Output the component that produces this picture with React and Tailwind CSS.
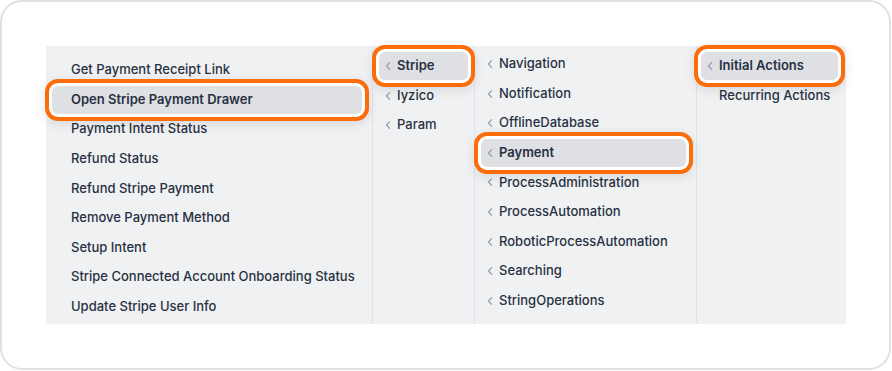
import React from "react";

const ring =
  "relative z-10 bg-[#dfe0e4] shadow-[0_0_0_3px_#ffffff,0_0_0_7px_#fb6c0b,0_3px_12px_7px_rgba(0,0,0,0.10)]";

function Chevron() {
  return (
    <svg width="6" height="8" viewBox="0 0 6 8" className="shrink-0">
      <path d="M4.5 0.8 L1.5 4 L4.5 7.2" fill="none" stroke="#9ca2ab" strokeWidth="1.3" strokeLinecap="round" strokeLinejoin="round" />
    </svg>
  );
}

function Item({ label, selected, chevron = true, spacer = false }) {
  return (
    <div
      className={`h-[28px] shrink-0 flex items-center gap-[6px] pl-[6px] rounded-[6px] whitespace-nowrap ${
        selected ? ring + " font-semibold" : "font-medium"
      }`}
    >
      {chevron ? <Chevron /> : spacer ? <span className="w-[6px] shrink-0" /> : null}
      <span>{label}</span>
    </div>
  );
}

function PlainItem({ label, selected }) {
  return (
    <div
      className={`h-[28px] shrink-0 flex items-center pl-[19px] rounded-[6px] whitespace-nowrap ${
        selected ? ring + " font-semibold" : "font-medium"
      }`}
    >
      {label}
    </div>
  );
}

export default function App() {
  const col1 = [
    "Get Payment Receipt Link",
    "Open Stripe Payment Drawer",
    "Payment Intent Status",
    "Refund Status",
    "Refund Stripe Payment",
    "Remove Payment Method",
    "Setup Intent",
    "Stripe Connected Account Onboarding Status",
    "Update Stripe User Info",
  ];
  const col3 = [
    "Navigation",
    "Notification",
    "OfflineDatabase",
    "Payment",
    "ProcessAdministration",
    "ProcessAutomation",
    "RoboticProcessAutomation",
    "Searching",
    "StringOperations",
    "UIOperations",
  ];
  return (
    <div className="w-[892px] h-[371px] bg-white">
      <div className="w-[891px] h-[370px] border-2 border-[#dfe1e5] rounded-[22px] bg-white p-[44px]">
        <div
          className="w-[800px] h-[278px] bg-[#f0f1f3] flex text-[13px] text-[#273142]"
          style={{ fontFamily: "Inter, 'Noto Sans', sans-serif" }}
        >
          <div className="w-[327px] shrink-0 border-r border-[#e1e3e7] pt-[10px] pl-[6px] pr-[10px] flex flex-col gap-[1.6px]">
            {col1.map((l, i) => (
              <PlainItem key={l} label={l} selected={i === 1} />
            ))}
          </div>
          <div className="w-[102px] shrink-0 border-r border-[#e1e3e7] pt-[6px] px-[6px] flex flex-col gap-[1.6px]">
            <Item label="Stripe" selected />
            <Item label="Iyzico" />
            <Item label="Param" />
          </div>
          <div className="w-[222px] shrink-0 h-[278px] border-r border-[#e1e3e7] pt-[4px] pl-[6px] pr-[10px] flex flex-col gap-[1.6px] [clip-path:inset(-20px_-20px_0_-20px)]">
            {col3.map((l, i) => (
              <Item key={l} label={l} selected={i === 3} />
            ))}
          </div>
          <div className="flex-1 pt-[6px] pl-[4px] pr-[8px] flex flex-col gap-[1.6px]">
            <Item label="Initial Actions" selected />
            <Item label="Recurring Actions" chevron={false} spacer />
          </div>
        </div>
      </div>
    </div>
  );
}
